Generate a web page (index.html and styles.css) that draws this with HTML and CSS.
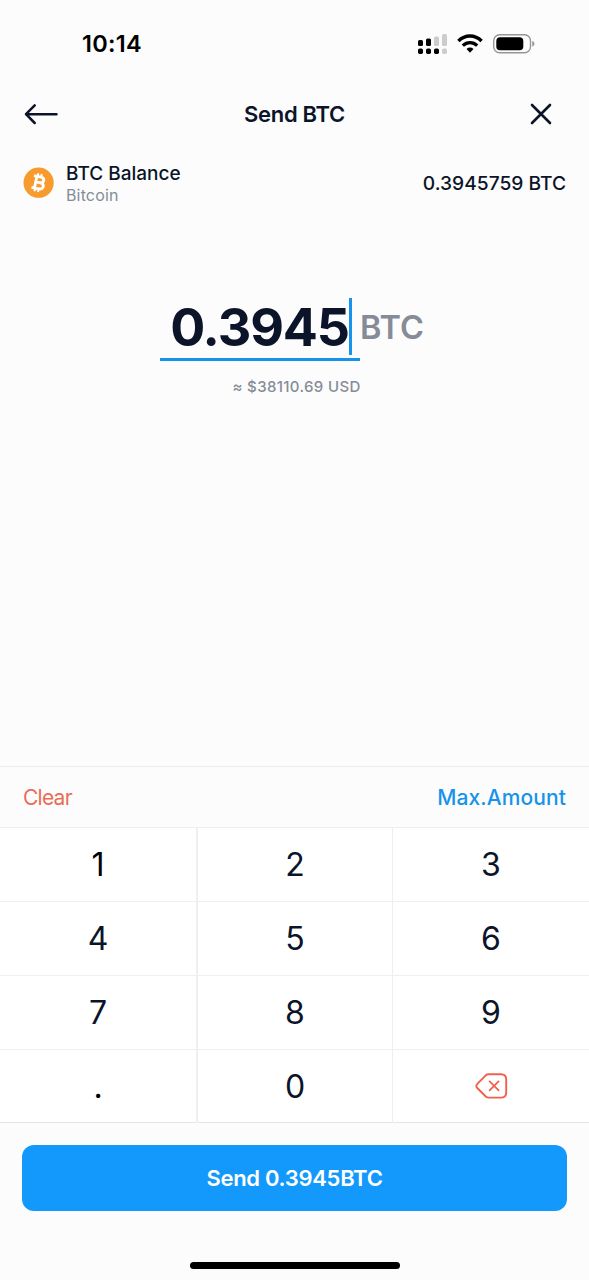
FILE: index.html
```html
<!DOCTYPE html>
<html lang="en">
<head>
<meta charset="utf-8">
<title>Send BTC</title>
<link rel="stylesheet" href="styles.css">
</head>
<body>
<main class="screen">
  <div class="status">
    <span class="time">10:14</span>
    <svg class="indicators" width="118" height="22" viewBox="0 0 118 22">
      <g fill="#000"><rect x="1" y="7" width="5" height="6" rx="1.5"/><rect x="9" y="5.5" width="5" height="7.5" rx="1.5"/><rect x="1" y="15.5" width="5" height="5.5" rx="1.7"/><rect x="9" y="15.5" width="5" height="5.5" rx="1.7"/><rect x="17" y="15.5" width="5" height="5.5" rx="1.7"/></g>
      <g fill="#ccc"><rect x="17" y="3.5" width="5" height="9.5" rx="1.5"/><rect x="25" y="1" width="5" height="12" rx="1.5"/><rect x="25" y="15.5" width="5" height="5.5" rx="1.7"/></g>
      <g fill="none" stroke="#000" stroke-width="3.3"><path d="M41.4 8C48 1.3 58 1.3 64.6 8"/><path d="M45.8 12.6C50 8.6 56 8.6 60.2 12.6"/></g>
      <path d="M49.5 15.9Q53 13.1 56.5 15.9L53 19.8Z" fill="#000"/>
      <rect x="76.7" y="1.7" width="36.8" height="18" rx="6" fill="none" stroke="#969696" stroke-width="1.4"/>
      <rect x="79.3" y="4.2" width="27" height="13" rx="3.8"/>
      <path d="M115.3 7.7Q117.5 8.6 117.5 10.7T115.3 13.7Z" fill="#969696"/>
    </svg>
  </div>
  <header class="header">
    <svg width="36" height="24" viewBox="0 0 36 24" fill="none" stroke="#0b1428" stroke-width="2.5" stroke-linecap="round" stroke-linejoin="round"><path d="M33.5 12.2H3M11.7 3.3L3 12.2L11.7 21"/></svg>
    <h1 class="title">Send BTC</h1>
    <svg width="24" height="24" viewBox="0 0 24 24" fill="none" stroke="#0b1428" stroke-width="2.6" stroke-linecap="round"><path d="M3 3L21 21M21 3L3 21"/></svg>
  </header>
  <section class="balance">
    <svg class="coin" width="32" height="32" viewBox="0 0 32 32">
      <circle cx="15.6" cy="15.7" r="15.1" fill="#f79b2e"/>
      <g transform="translate(-.4 -.3) rotate(12 16 16)" fill="none" stroke="#fff" stroke-width="2.8" stroke-linejoin="round"><path d="M13 10V22M10 10H17C21.8 10 21.8 15.7 17 15.7H13M17 15.7C22.8 15.7 22.8 22 17.3 22H10"/><path stroke-width="2" d="M13.8 6.8V10M17.3 6.8V10M13.8 22V25.2M17.3 22V25.2"/></g>
    </svg>
    <div class="asset"><span class="asset-name">BTC Balance</span><span class="asset-chain">Bitcoin</span></div>
    <span class="asset-total">0.3945759 BTC</span>
  </section>
  <section class="amount">
    <div class="entry">
      <div class="field"><span class="value">0.3945</span><span class="caret"></span></div>
      <span class="unit">BTC</span>
    </div>
    <span class="fiat">≈ $38110.69 USD</span>
  </section>
  <div class="actions"><span class="clear">Clear</span><span class="max">Max.Amount</span></div>
  <section class="keypad">
    <span class="key black">1</span><span class="key">2</span><span class="key">3</span>
    <span class="key">4</span><span class="key">5</span><span class="key">6</span>
    <span class="key">7</span><span class="key">8</span><span class="key">9</span>
    <span class="key black dot">.</span><span class="key">0</span>
    <span class="key erase"><svg width="34" height="28" viewBox="0 0 34 28" fill="none" stroke="#f0604a" stroke-linecap="round" stroke-linejoin="round"><path stroke-width="1.9" d="M13.5 2.2H26Q31.2 2.2 31.2 7.4V20.4Q31.2 25.6 26 25.6H13.5Q12 25.6 10.8 24.5L2.3 16Q.3 13.9 2.3 11.8L10.8 3.3Q12 2.2 13.5 2.2Z"/><path stroke-width="1.7" d="M14.6 9.4L23.6 18.4M23.6 9.4L14.6 18.4"/></svg></span>
  </section>
  <footer class="footer">
    <div class="send">Send 0.3945BTC</div>
    <div class="home"></div>
  </footer>
</main>
</body>
</html>
```
FILE: styles.css
```css
* { box-sizing: border-box; }
body { margin: 0; background: #fcfcfc; color: #0b1428; font-family: Inter, "Liberation Sans", sans-serif; }
.screen { width: 589px; height: 1280px; display: flex; flex-direction: column; background: #fcfcfc; overflow: hidden; }
svg { display: block; flex: none; }
.status { height: 88px; padding: 0 54px 0 82px; display: flex; align-items: center; justify-content: space-between; }
.time { color: #000; font-size: 23.5px; font-weight: 600; line-height: 28px; letter-spacing: .3px; }
.indicators { margin-bottom: 1px; }
.header { height: 52px; padding: 0 36px 0 23px; display: grid; grid-template-columns: 36px 1fr 24px; align-items: center; }
.title { margin: 0; padding-left: 1px; text-align: center; font-size: 22px; font-weight: 600; line-height: 28px; letter-spacing: -0.3px; }
.balance { height: 86px; padding: 0 23px; display: flex; align-items: center; }
.coin { margin-right: 11px; }
.asset { flex: 1; display: flex; flex-direction: column; padding-top: 1px; }
.asset-name { font-size: 19px; font-weight: 500; line-height: 22px; }
.asset-chain { font-size: 16px; line-height: 20px; letter-spacing: .15px; color: #858c98; }
.asset-total { font-size: 19.2px; font-weight: 500; }
.amount { flex: 1; padding-top: 72px; display: flex; flex-direction: column; align-items: center; }
.entry { display: flex; height: 63px; margin-right: 5px; }
.field { width: 200px; height: 63px; padding-right: 8px; border-bottom: 3px solid #1793ea; display: flex; justify-content: flex-end; align-items: flex-start; }
.value { font-size: 52px; font-weight: 700; line-height: 60px; letter-spacing: -1.1px; }
.caret { width: 3px; height: 57px; background: #1793ea; }
.unit { font-size: 32.5px; font-weight: 600; line-height: 59px; color: #858c98; }
.fiat { margin-top: 16px; font-size: 15px; font-weight: 500; line-height: 20px; letter-spacing: .35px; color: #858c98; padding-left: 4px; }
.actions { height: 61px; padding: 0 23px; border-top: 1px solid #ebebec; display: flex; justify-content: space-between; align-items: center; font-size: 21px; }
.clear { color: #e96d58; letter-spacing: -.75px; }
.max { color: #1793ea; font-weight: 500; letter-spacing: .1px; }
.keypad { height: 296px; display: grid; grid-template-columns: 198px 195px 196px; grid-template-rows: repeat(4, 74px); background: #fff; border-bottom: 1px solid #e6e6e8; }
.key { padding-top: 1px; border-top: 1px solid #efeff0; border-right: 1px solid #efeff0; display: flex; align-items: center; justify-content: center; font-size: 32px; line-height: 40px; }
.key:nth-child(3n) { border-right: 0; }
.key:nth-child(3n+1) { border-right: 2px solid #efeff0; }
.key.erase { padding: 0 0 1px 1px; }
.black { color: #000; }
.footer { height: 157px; padding: 22px 22px 0; display: flex; flex-direction: column; align-items: center; }
.send { width: 545px; height: 66px; border-radius: 12px; background: #1399fb; color: #fff; text-align: center; font-size: 22px; font-weight: 600; line-height: 66px; letter-spacing: -.3px; }
.home { width: 210px; height: 7px; margin-top: 51px; border-radius: 4px; background: #000; }
```
